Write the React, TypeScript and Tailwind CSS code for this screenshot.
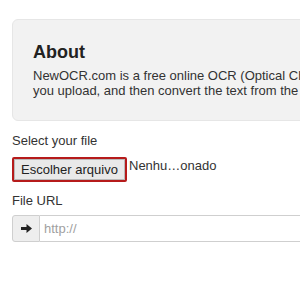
import React from 'react';

function ArrowRight() {
  return (
    <svg width="11" height="9" viewBox="0 0 11 9" className="block">
      <path d="M0 3h5.5V0L11 4.5 5.5 9V6H0z" fill="#222" />
    </svg>
  );
}

export default function App() {
  return (
    <div className="w-[300px] h-[300px] overflow-hidden bg-white text-[13px] leading-[15px] text-[#333] font-['Liberation_Sans',Arial,sans-serif]">
      <div className="w-[720px] pl-3 pt-[19px]">
        {/* About box */}
        <div className="h-[102px] rounded-md border border-[#e6e6e6] bg-[#f2f2f2] pl-5 pt-[22px]">
          <h2 className="text-[18px] leading-[20px] font-bold text-[#222]">About</h2>
          <p className="mt-[6px] whitespace-nowrap">
            NewOCR.com is a free online OCR (Optical Character Recognition) service, can analyze the text in any image file that
            <br />
            you upload, and then convert the text from the image into text that you can easily edit on your computer.
          </p>
        </div>

        {/* File select */}
        <div className="mt-3">
          <label className="block">Select your file</label>
          <div className="mt-[9px] flex items-start">
            <div className="h-[25px] w-[115px] rounded-[2px] border-2 border-[#b61b1b] p-0">
              <button className="flex h-full w-full items-center justify-center border border-[#b9b9b9] bg-[#e9e9e9] text-[13px] leading-[15px] text-[#222]">
                Escolher arquivo
              </button>
            </div>
            <span className="ml-[2px] pt-[1px]">Nenhu…onado</span>
          </div>
        </div>

        {/* File URL */}
        <div className="mt-[11px]">
          <label className="block">File URL</label>
          <div className="mt-[7px] flex h-[27px]">
            <span className="flex w-[28px] items-center justify-center rounded-l-[3px] border border-[#cfcfcf] bg-[#eeeeee]">
              <ArrowRight />
            </span>
            <input
              className="h-full flex-1 border border-l-0 border-[#cfcfcf] pl-[4px] text-[13px] outline-none placeholder:text-[#a0a0a0]"
              placeholder="http://"
            />
          </div>
        </div>
      </div>
    </div>
  );
}
